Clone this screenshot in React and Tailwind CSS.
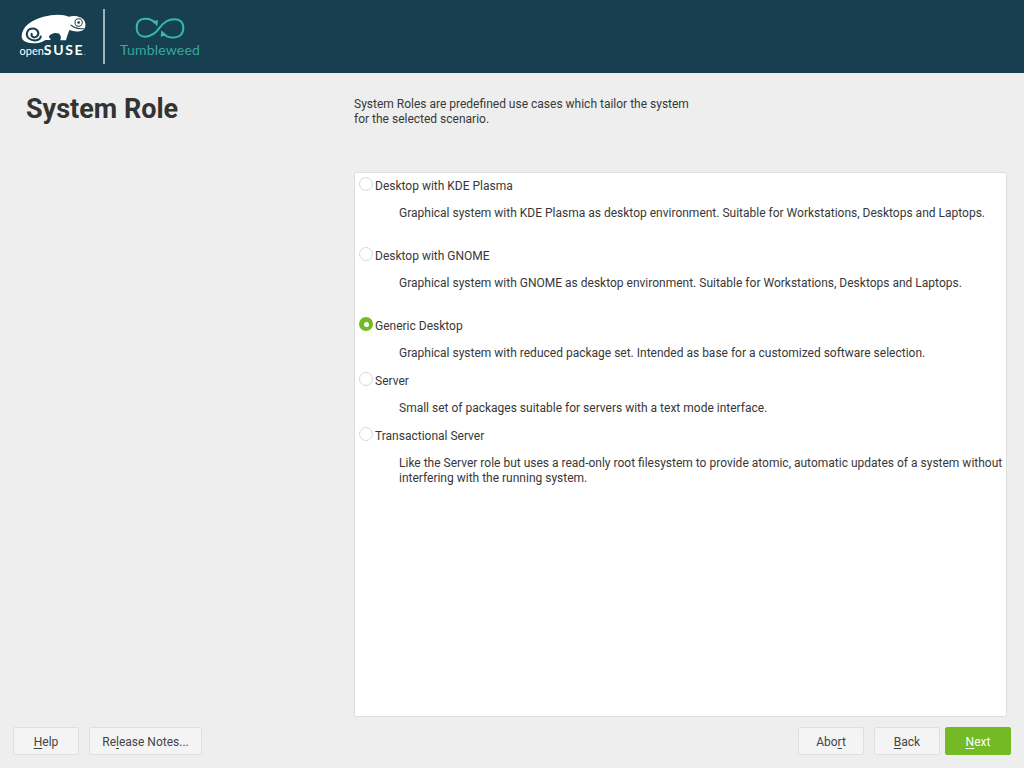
import React from 'react';

const roles = [
  { name: 'Desktop with KDE Plasma', desc: 'Graphical system with KDE Plasma as desktop environment. Suitable for Workstations, Desktops and Laptops.', gap: 'mb-[27px]' },
  { name: 'Desktop with GNOME', desc: 'Graphical system with GNOME as desktop environment. Suitable for Workstations, Desktops and Laptops.', gap: 'mb-[27px]' },
  { name: 'Generic Desktop', desc: 'Graphical system with reduced package set. Intended as base for a customized software selection.', selected: true, gap: 'mb-[12px]' },
  { name: 'Server', desc: 'Small set of packages suitable for servers with a text mode interface.', gap: 'mb-[12px]' },
  { name: 'Transactional Server', desc: 'Like the Server role but uses a read-only root filesystem to provide atomic, automatic updates of a system without interfering with the running system.', gap: '' },
];

const Mascot = () => (
  <svg width="67" height="32" viewBox="60 42 200 95">
    <path
      fill="#ffffff"
      d="M65 110C66 84 92 63 130 53C160 45 190 45 206 53C222 48 244 52 252 65C258 76 256 88 247 93C234 100 218 97 208 92C204 102 200 112 197 123L180 123C184 116 182 108 176 103C164 99 152 103 146 112C148 116 150 119 152 122L136 122C130 126 118 132 100 132C78 132 64 124 65 110Z"
    />
    <path
      fill="none"
      stroke="#173f4f"
      strokeWidth="6"
      strokeLinecap="round"
      d="M122 112C120 124 100 128 87 118C74 106 82 88 98 88C113 88 120 104 110 112C102 118 92 112 95 104"
    />
    <circle cx="235" cy="70" r="11" fill="none" stroke="#173f4f" strokeWidth="3" />
    <circle cx="235" cy="70" r="4" fill="#173f4f" />
    <path d="M212 78C222 86 236 91 249 88" fill="none" stroke="#173f4f" strokeWidth="3" strokeLinecap="round" />
  </svg>
);

const InfinityMark = () => (
  <svg width="50" height="24" viewBox="407 47 150 72">
    <path
      fill="none"
      stroke="#35b9a9"
      strokeWidth="6"
      d="M468 68C452 50 412 48 412 82C412 118 456 118 481 82C505 48 552 48 552 82C552 118 508 118 492 99"
    />
    <path fill="#35b9a9" d="M458 63L476 59L474 78Z" />
    <path fill="#35b9a9" d="M502 105L484 109L486 90Z" />
  </svg>
);

const Radio = ({ selected }) =>
  selected ? (
    <span className="w-[14px] h-[14px] -mt-[1px] self-start rounded-full bg-[#73ba25] flex items-center justify-center shrink-0">
      <span className="w-[5px] h-[5px] rounded-full bg-white" />
    </span>
  ) : (
    <span className="w-[14px] h-[14px] -mt-[1px] self-start rounded-full bg-white border border-[#d5d9e2] shrink-0" />
  );

const Role = ({ role }) => (
  <div className={role.gap}>
    <div className="flex items-center gap-[2px] h-[15px]">
      <Radio selected={role.selected} />
      <span>{role.name}</span>
    </div>
    <p className="mt-[13px] pl-[40px] leading-[15px]">{role.desc}</p>
  </div>
);

const Button = ({ before = '', mnemonic, after, width, primary }) => (
  <button
    className={`h-[28px] pt-[1px] ${width} rounded-[2px] border text-[12px] ${
      primary ? 'bg-[#73ba25] border-[#73ba25] text-white' : 'bg-[#f4f4f4] border-[#dfdfdf] text-[#444444]'
    }`}
  >
    {before}
    <span className="underline underline-offset-2">{mnemonic}</span>
    {after}
  </button>
);

export default function App() {
  return (
    <div className="w-[1024px] h-[768px] flex flex-col bg-[#eeeeee] text-[#383838] text-[12px] font-['Roboto',sans-serif] overflow-hidden">
      <header className="h-[73px] bg-[#173f4f] flex items-center pl-[18px] shrink-0">
        <div className="w-[70px] flex flex-col items-center -mt-[1px]">
          <Mascot />
          <div className="text-white leading-[12px] text-[11px] font-['Lato',sans-serif] -mt-[1px] whitespace-nowrap -ml-[1px]">
            open<span className="font-bold text-[14px] tracking-[1.6px]">SUSE</span>
            <span className="text-[6px]">.</span>
          </div>
        </div>
        <div className="w-[2px] h-[55px] bg-[#a3b2b9] ml-[15px]" />
        <div className="ml-[14px] w-[82px] flex flex-col items-center">
          <InfinityMark />
          <div className="text-[#35a99b] text-[14px] leading-[16px] mt-[2px] tracking-[0.2px] font-['Lato',sans-serif]">Tumbleweed</div>
        </div>
      </header>

      <main className="flex flex-1 min-h-0 pr-[17px]">
        <div className="w-[354px] pl-[26px] pt-[20px] shrink-0">
          <h1 className="text-[27px] leading-[33px] font-bold text-[#333333]">System Role</h1>
        </div>
        <div className="flex-1 flex flex-col pt-[24px]">
          <p className="leading-[15px] h-[75px]">
            System Roles are predefined use cases which tailor the system
            <br />
            for the selected scenario.
          </p>
          <div className="flex-1 bg-white border border-[#dedede] rounded-[2px] pl-[4px] pr-[2px] pt-[5px]">
            {roles.map((role) => (
              <Role key={role.name} role={role} />
            ))}
          </div>
        </div>
      </main>

      <footer className="h-[51px] shrink-0 flex items-start justify-between pt-[10px] pl-[13px] pr-[13px]">
        <div className="flex gap-[10px]">
          <Button mnemonic="H" after="elp" width="w-[66px]" />
          <Button before="Re" mnemonic="l" after="ease Notes..." width="w-[113px]" />
        </div>
        <div className="flex">
          <Button before="Abo" mnemonic="r" after="t" width="w-[66px] mr-[10px]" />
          <Button mnemonic="B" after="ack" width="w-[66px] mr-[5px]" />
          <Button mnemonic="N" after="ext" width="w-[66px]" primary />
        </div>
      </footer>
    </div>
  );
}
